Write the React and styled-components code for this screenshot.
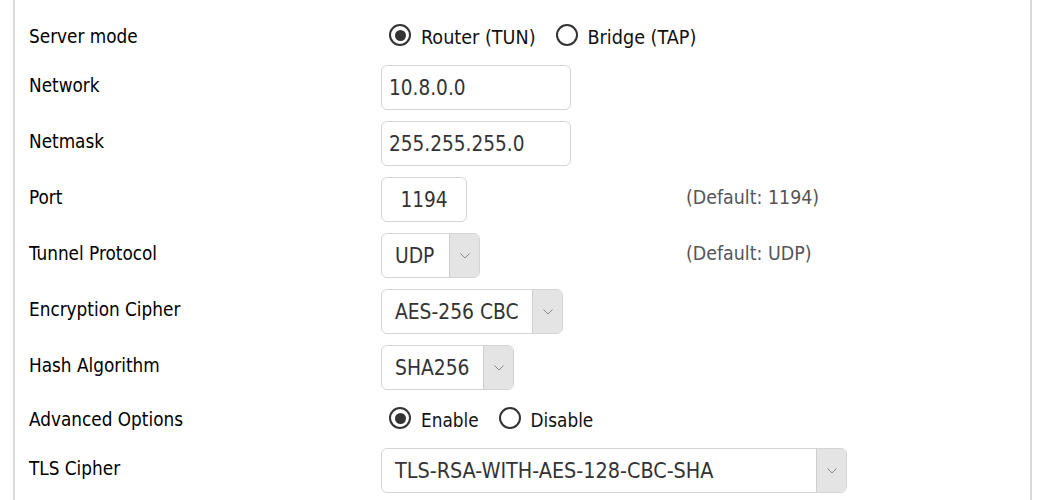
import React from "react";
import styled, { createGlobalStyle } from "styled-components";

const Global = createGlobalStyle`
  html, body { margin: 0; padding: 0; background: #fff; }
  body { font-family: "DejaVu Sans Condensed", "DejaVu Sans", sans-serif; font-stretch: condensed; }
`;

const Panel = styled.div`
  margin-left: 13px;
  width: 1019px;
  height: 500px;
  box-sizing: border-box;
  border-left: 2px solid #dadada;
  border-right: 2px solid #dadada;
  padding: 18px 0 0 14px;
  display: flex;
  flex-direction: column;
  gap: 11px;
  overflow: hidden;
`;

const Row = styled.div`
  display: grid;
  grid-template-columns: 352px 305px 1fr;
  align-items: center;
  height: ${(p) => (p.$short ? 36 : 45)}px;
`;

const Label = styled.div`
  font-size: 18.8px;
  color: #000;
  white-space: nowrap;
  margin-top: ${(p) => (p.$short ? 0 : -4)}px;
`;

const Controls = styled.div`
  display: flex;
  align-items: center;
  grid-column: ${(p) => (p.$wide ? "2 / 4" : "2")};
  height: 100%;
`;

const Help = styled.div`
  font-size: 19.4px;
  color: #555;
  white-space: nowrap;
  margin-top: -5px;
`;

const RadioOption = styled.label`
  display: flex;
  align-items: center;
  gap: 10px;
  margin-left: ${(p) => (p.$first ? "8px" : "20px")};
  font-size: ${(p) => p.$fs || 19.6}px;
  color: #111;
  white-space: nowrap;
  position: relative;
  top: 1px;
`;

const RadioCircle = styled.span`
  flex: none;
  width: 18px;
  height: 18px;
  border: 2px solid #333;
  border-radius: 50%;
  display: flex;
  align-items: center;
  justify-content: center;
  position: relative;
  top: -2px;
  &::after {
    content: "";
    display: ${(p) => (p.$checked ? "block" : "none")};
    width: 11px;
    height: 11px;
    border-radius: 50%;
    background: #333;
  }
`;

const TextInput = styled.div`
  box-sizing: border-box;
  width: ${(p) => p.$w}px;
  height: 45px;
  border: 1.5px solid #d4d4d4;
  border-radius: 6px;
  display: flex;
  align-items: center;
  justify-content: ${(p) => (p.$center ? "center" : "flex-start")};
  padding-left: ${(p) => (p.$center ? 0 : 7)}px;
  font-size: 20.6px;
  color: #333;
  background: #fff;
`;

const Select = styled.div`
  box-sizing: border-box;
  width: ${(p) => p.$w}px;
  height: 45px;
  border: 1.5px solid #d4d4d4;
  border-radius: 6px;
  display: flex;
  align-items: stretch;
  overflow: hidden;
  background: #fff;
  font-size: ${(p) => p.$fs || 20.8}px;
  color: #333;
`;

const SelectValue = styled.div`
  flex: 1;
  display: flex;
  align-items: center;
  padding-left: 13px;
  white-space: nowrap;
`;

const SelectArrow = styled.div`
  width: 29px;
  background: #e4e4e4;
  border-left: 1px solid #cfcfcf;
  display: flex;
  align-items: center;
  justify-content: center;
`;

const Chevron = () => (
  <svg width="10" height="6" viewBox="0 0 10 6">
    <path d="M0.5 0.5 L5 5 L9.5 0.5" fill="none" stroke="#888" strokeWidth="1" />
  </svg>
);

const Radio = ({ checked, first, fs, children }) => (
  <RadioOption $first={first} $fs={fs}>
    <RadioCircle $checked={checked} />
    {children}
  </RadioOption>
);

const Dropdown = ({ w, value, fs }) => (
  <Select $w={w} $fs={fs}>
    <SelectValue>{value}</SelectValue>
    <SelectArrow>
      <Chevron />
    </SelectArrow>
  </Select>
);

export default function App() {
  return (
    <>
      <Global />
      <Panel>
        <Row $short>
          <Label $short>Server mode</Label>
          <Controls $wide>
            <Radio checked first>Router (TUN)</Radio>
            <Radio>Bridge (TAP)</Radio>
          </Controls>
        </Row>
        <Row>
          <Label>Network</Label>
          <Controls>
            <TextInput $w={190}>10.8.0.0</TextInput>
          </Controls>
        </Row>
        <Row>
          <Label>Netmask</Label>
          <Controls>
            <TextInput $w={190}>255.255.255.0</TextInput>
          </Controls>
        </Row>
        <Row>
          <Label>Port</Label>
          <Controls>
            <TextInput $w={86} $center>1194</TextInput>
          </Controls>
          <Help>(Default: 1194)</Help>
        </Row>
        <Row>
          <Label>Tunnel Protocol</Label>
          <Controls>
            <Dropdown w={99} value="UDP" />
          </Controls>
          <Help>(Default: UDP)</Help>
        </Row>
        <Row>
          <Label>Encryption Cipher</Label>
          <Controls>
            <Dropdown w={182} value="AES-256 CBC" />
          </Controls>
        </Row>
        <Row>
          <Label>Hash Algorithm</Label>
          <Controls>
            <Dropdown w={133} value="SHA256" />
          </Controls>
        </Row>
        <Row $short>
          <Label $short>Advanced Options</Label>
          <Controls $wide>
            <Radio checked first fs={18.8}>Enable</Radio>
            <Radio fs={18.8}>Disable</Radio>
          </Controls>
        </Row>
        <Row>
          <Label>TLS Cipher</Label>
          <Controls $wide>
            <Dropdown w={466} value="TLS-RSA-WITH-AES-128-CBC-SHA" fs={21.4} />
          </Controls>
        </Row>
      </Panel>
    </>
  );
}
